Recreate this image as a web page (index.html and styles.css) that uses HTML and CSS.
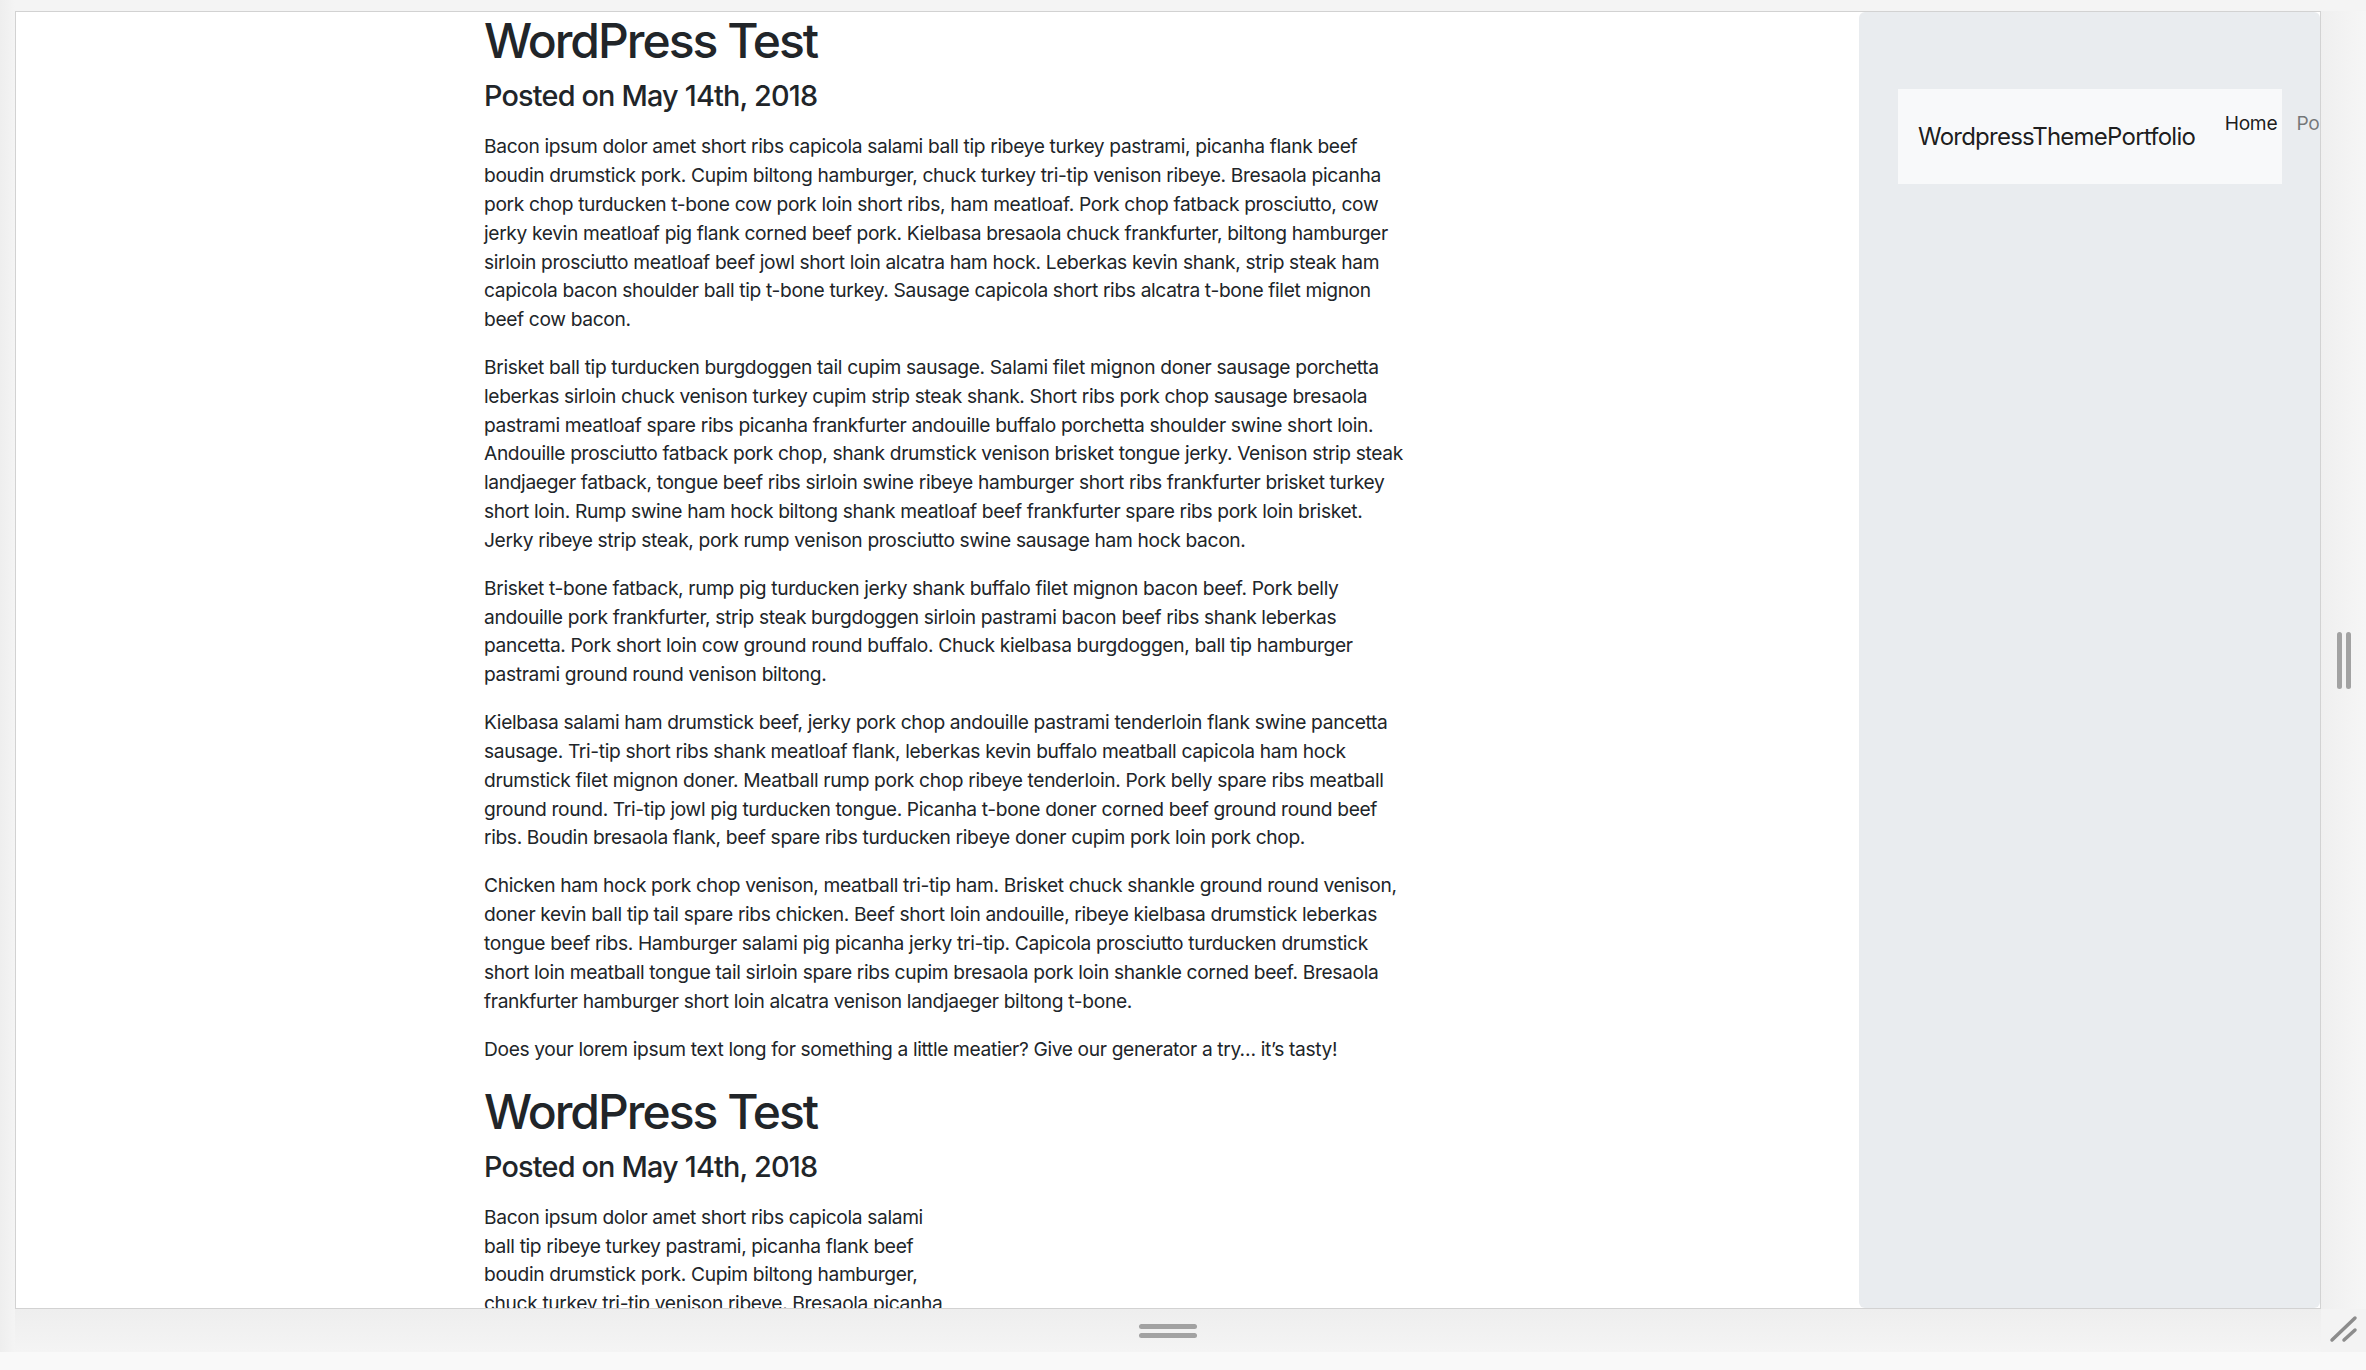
FILE: index.html
```html
<!DOCTYPE html>
<html lang="en">
<head>
<meta charset="utf-8">
<title>WordpressThemePortfolio</title>
<link rel="stylesheet" href="styles.css">
</head>
<body>
<div class="stage">
  <div class="resizer">
    <div class="viewport">
      <main class="content">
        <article class="post">
          <h1 class="post-title">WordPress Test</h1>
          <h4 class="post-date">Posted on May 14th, 2018</h4>
          <p>Bacon ipsum dolor amet short ribs capicola salami ball tip ribeye turkey pastrami, picanha flank beef<br>boudin drumstick pork. Cupim biltong hamburger, chuck turkey tri-tip venison ribeye. Bresaola picanha<br>pork chop turducken t-bone cow pork loin short ribs, ham meatloaf. Pork chop fatback prosciutto, cow<br>jerky kevin meatloaf pig flank corned beef pork. Kielbasa bresaola chuck frankfurter, biltong hamburger<br>sirloin prosciutto meatloaf beef jowl short loin alcatra ham hock. Leberkas kevin shank, strip steak ham<br>capicola bacon shoulder ball tip t-bone turkey. Sausage capicola short ribs alcatra t-bone filet mignon<br>beef cow bacon.</p>
          <p>Brisket ball tip turducken burgdoggen tail cupim sausage. Salami filet mignon doner sausage porchetta<br>leberkas sirloin chuck venison turkey cupim strip steak shank. Short ribs pork chop sausage bresaola<br>pastrami meatloaf spare ribs picanha frankfurter andouille buffalo porchetta shoulder swine short loin.<br>Andouille prosciutto fatback pork chop, shank drumstick venison brisket tongue jerky. Venison strip steak<br>landjaeger fatback, tongue beef ribs sirloin swine ribeye hamburger short ribs frankfurter brisket turkey<br>short loin. Rump swine ham hock biltong shank meatloaf beef frankfurter spare ribs pork loin brisket.<br>Jerky ribeye strip steak, pork rump venison prosciutto swine sausage ham hock bacon.</p>
          <p>Brisket t-bone fatback, rump pig turducken jerky shank buffalo filet mignon bacon beef. Pork belly<br>andouille pork frankfurter, strip steak burgdoggen sirloin pastrami bacon beef ribs shank leberkas<br>pancetta. Pork short loin cow ground round buffalo. Chuck kielbasa burgdoggen, ball tip hamburger<br>pastrami ground round venison biltong.</p>
          <p>Kielbasa salami ham drumstick beef, jerky pork chop andouille pastrami tenderloin flank swine pancetta<br>sausage. Tri-tip short ribs shank meatloaf flank, leberkas kevin buffalo meatball capicola ham hock<br>drumstick filet mignon doner. Meatball rump pork chop ribeye tenderloin. Pork belly spare ribs meatball<br>ground round. Tri-tip jowl pig turducken tongue. Picanha t-bone doner corned beef ground round beef<br>ribs. Boudin bresaola flank, beef spare ribs turducken ribeye doner cupim pork loin pork chop.</p>
          <p>Chicken ham hock pork chop venison, meatball tri-tip ham. Brisket chuck shankle ground round venison,<br>doner kevin ball tip tail spare ribs chicken. Beef short loin andouille, ribeye kielbasa drumstick leberkas<br>tongue beef ribs. Hamburger salami pig picanha jerky tri-tip. Capicola prosciutto turducken drumstick<br>short loin meatball tongue tail sirloin spare ribs cupim bresaola pork loin shankle corned beef. Bresaola<br>frankfurter hamburger short loin alcatra venison landjaeger biltong t-bone.</p>
          <p>Does your lorem ipsum text long for something a little meatier? Give our generator a try… it’s tasty!</p>
        </article>
        <article class="post">
          <h1 class="post-title">WordPress Test</h1>
          <h4 class="post-date">Posted on May 14th, 2018</h4>
          <p>Bacon ipsum dolor amet short ribs capicola salami<br>ball tip ribeye turkey pastrami, picanha flank beef<br>boudin drumstick pork. Cupim biltong hamburger,<br>chuck turkey tri-tip venison ribeye. Bresaola picanha</p>
        </article>
      </main>
      <aside class="sidebar">
        <nav class="navbar">
          <a class="brand" href="#">WordpressThemePortfolio</a>
          <ul class="nav-list">
            <li><a class="nav-link active" href="#">Home</a></li>
            <li><a class="nav-link" href="#">Portfolio</a></li>
          </ul>
        </nav>
      </aside>
    </div>
    <div class="handle-right"><span class="bar-v"></span><span class="bar-v"></span></div>
    <div class="handle-bottom"><span class="bar-h"></span><span class="bar-h"></span></div>
    <div class="corner">
      <svg width="45" height="43" viewBox="0 0 45 43" aria-hidden="true">
        <line x1="34" y1="9" x2="11" y2="31" stroke="#8c8c8c" stroke-width="3.5" stroke-linecap="round"/>
        <line x1="34" y1="21" x2="23" y2="31" stroke="#8c8c8c" stroke-width="3.5" stroke-linecap="round"/>
      </svg>
    </div>
  </div>
</div>
</body>
</html>
```

FILE: styles.css
```css
html, body {
  margin: 0;
  padding: 0;
}

body {
  background: #f9f9f9;
  font-family: "Inter", "Liberation Sans", sans-serif;
  color: #212529;
  height: 1370px;
  overflow: hidden;
}

.stage {
  background: linear-gradient(to right, #eeeeee 0, #f4f4f4 15px);
  padding: 11px 0 0 15px;
}

.resizer {
  display: grid;
  grid-template-columns: 2306px 45px;
  grid-template-rows: 1298px 43px;
}

.viewport {
  border: 1px solid #d2d2d2;
  background: #ffffff;
  display: flex;
  overflow: hidden;
}

.content {
  flex: 1 1 auto;
  padding-left: 468px;
  overflow: hidden;
}

.post-title {
  font-size: 48px;
  font-weight: 500;
  line-height: 1.2;
  margin: 0 0 9.6px;
  letter-spacing: -2px;
}

.post-date {
  font-size: 28.8px;
  font-weight: 500;
  line-height: 1.2;
  margin: 0 0 18.6px;
  letter-spacing: -0.8px;
}

.post p {
  font-size: 19.2px;
  line-height: 28.8px;
  margin: 0 0 19.2px;
  white-space: nowrap;
  letter-spacing: -0.35px;
}

.sidebar {
  flex: 0 0 461px;
  background: #e9ecef;
  border-radius: 6px;
  padding: 77px 0 0 39px;
  box-sizing: border-box;
}

.navbar {
  width: 384px;
  height: 95px;
  background: #f8f9fa;
  display: flex;
  align-items: flex-start;
  padding: 9.6px 0 0 20px;
  box-sizing: border-box;
  white-space: nowrap;
}

.brand {
  font-size: 24px;
  line-height: 36px;
  padding: 6px 0;
  margin: 14px 20px 0 0;
  color: rgba(0, 0, 0, 0.9);
  text-decoration: none;
  letter-spacing: -0.76px;
}

.nav-list {
  list-style: none;
  margin: 10px 0 0;
  padding: 0;
  display: flex;
}

.nav-link {
  display: block;
  font-size: 19.2px;
  line-height: 28.8px;
  padding: 0 9.6px;
  color: rgba(0, 0, 0, 0.5);
  text-decoration: none;
  letter-spacing: -0.3px;
}

.nav-link.active {
  color: rgba(0, 0, 0, 0.9);
}

.handle-right {
  grid-row: 1;
  grid-column: 2;
  background: linear-gradient(to right, #efefef, #f6f6f6);
  display: flex;
  justify-content: center;
  align-items: center;
  gap: 4px;
}

.bar-v {
  width: 5px;
  height: 57px;
  border-radius: 3px;
  background: #a2a2a2;
}

.handle-bottom {
  grid-row: 2;
  grid-column: 1;
  background: linear-gradient(to bottom, #eeeeee, #f4f4f4);
  display: flex;
  flex-direction: column;
  justify-content: center;
  align-items: center;
  gap: 4px;
}

.bar-h {
  width: 58px;
  height: 5px;
  border-radius: 3px;
  background: #a2a2a2;
}

.corner {
  grid-row: 2;
  grid-column: 2;
  background: #f3f3f3;
}

.corner svg {
  display: block;
}
```
